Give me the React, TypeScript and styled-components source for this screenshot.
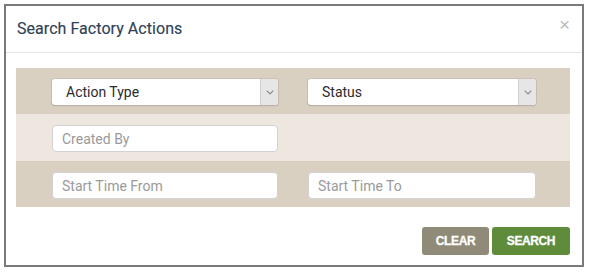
import React from "react";
import styled, { createGlobalStyle } from "styled-components";

const Global = createGlobalStyle`
  html, body { margin: 0; padding: 0; background: #ffffff; }
  body { font-family: Roboto, "Liberation Sans", Arial, sans-serif; }
  * { box-sizing: border-box; }
`;

const Page = styled.div`
  padding: 4px 5px 0 4px;
  width: 589px;
  height: 272px;
`;

const Modal = styled.div`
  width: 580px;
  height: 263px;
  border: 2px solid #7a7a7a;
  background: #fff;
  display: flex;
  flex-direction: column;
`;

const Header = styled.div`
  height: 47px;
  border-bottom: 1px solid #e6e6e6;
  display: flex;
  align-items: center;
  justify-content: space-between;
  padding: 0 12px 2px 11px;
`;

const Title = styled.h4`
  margin: 0;
  font-family: Roboto, "Liberation Sans", Arial, sans-serif;
  font-size: 16px;
  font-weight: 400;
  color: #2e4257;
  letter-spacing: 0.05px;
  -webkit-text-stroke: 0.15px #2e4257;
`;

const Close = styled.button`
  border: 0;
  background: none;
  padding: 0;
  margin-top: -8px;
  font-family: "Liberation Sans", Arial, sans-serif;
  font-size: 19px;
  line-height: 1;
  color: #bdbdbd;
  cursor: pointer;
`;

const Body = styled.div`
  padding: 15px 12px 0 10px;
`;

const Panel = styled.div`
  display: flex;
  flex-direction: column;
`;

const Row = styled.div<{ $tone: "dark" | "light" }>`
  height: ${(p) => (p.$tone === "dark" ? 46 : 47)}px;
  background: ${(p) => (p.$tone === "dark" ? "#d9d0c2" : "#ede7df")};
  display: grid;
  grid-template-columns: 226px 228px;
  column-gap: 30px;
  padding: 11px 0 0 36px;
  align-items: start;
`;

const SelectBox = styled.div`
  height: 26px;
  background: #fff;
  border-radius: 3px;
  box-shadow: 0 0 0 1px rgba(0, 0, 0, 0.06), 0 1px 2px rgba(0, 0, 0, 0.12);
  display: flex;
  align-items: stretch;
  overflow: hidden;
`;

const SelectLabel = styled.span`
  flex: 1;
  padding-left: 14px;
  display: flex;
  align-items: center;
  font-family: Roboto, "Liberation Sans", Arial, sans-serif;
  font-size: 14px;
  color: #2b2b2b;
`;

const Arrow = styled.span`
  width: 18px;
  background: #e6e6e6;
  border-left: 1px solid #cfcfcf;
  border-radius: 0 3px 3px 0;
  display: flex;
  align-items: center;
  justify-content: center;
`;

const TextInput = styled.input`
  height: 27px;
  width: 100%;
  border: 1px solid #d2d2d2;
  border-radius: 4px;
  background: #fff;
  padding: 0 0 0 9px;
  font-family: Roboto, "Liberation Sans", Arial, sans-serif;
  font-size: 14px;
  color: #333;
  outline: none;
  &::placeholder { color: #9a9a9a; }
`;

const Footer = styled.div`
  display: flex;
  justify-content: flex-end;
  gap: 3px;
  padding: 20px 12px 0 0;
`;

const Btn = styled.button<{ $variant: "clear" | "search" }>`
  height: 28px;
  border: 0;
  border-radius: 3px;
  padding: 0;
  width: ${(p) => (p.$variant === "clear" ? 67 : 78)}px;
  background: ${(p) => (p.$variant === "clear" ? "#908b78" : "#5e8c3b")};
  color: #fff;
  font-family: "Liberation Sans", Arial, sans-serif;
  font-weight: 700;
  font-size: 12px;
  letter-spacing: -0.4px;
  -webkit-text-stroke: 0.3px #fff;
  text-transform: uppercase;
  cursor: pointer;
`;

const Chevron = () => (
  <svg width="8" height="5" viewBox="0 0 8 5" fill="none">
    <path d="M0.7 0.7 L4 4 L7.3 0.7" stroke="#8a8a8a" strokeWidth="1.1" />
  </svg>
);

const Select = ({ label }: { label: string }) => (
  <SelectBox>
    <SelectLabel>{label}</SelectLabel>
    <Arrow>
      <Chevron />
    </Arrow>
  </SelectBox>
);

export default function App() {
  return (
    <>
      <Global />
      <Page>
        <Modal>
          <Header>
            <Title>Search Factory Actions</Title>
            <Close aria-label="Close">×</Close>
          </Header>
          <Body>
            <Panel>
              <Row $tone="dark">
                <Select label="Action Type" />
                <Select label="Status" />
              </Row>
              <Row $tone="light">
                <TextInput placeholder="Created By" />
              </Row>
              <Row $tone="dark">
                <TextInput placeholder="Start Time From" />
                <TextInput placeholder="Start Time To" />
              </Row>
            </Panel>
          </Body>
          <Footer>
            <Btn $variant="clear">Clear</Btn>
            <Btn $variant="search">Search</Btn>
          </Footer>
        </Modal>
      </Page>
    </>
  );
}
